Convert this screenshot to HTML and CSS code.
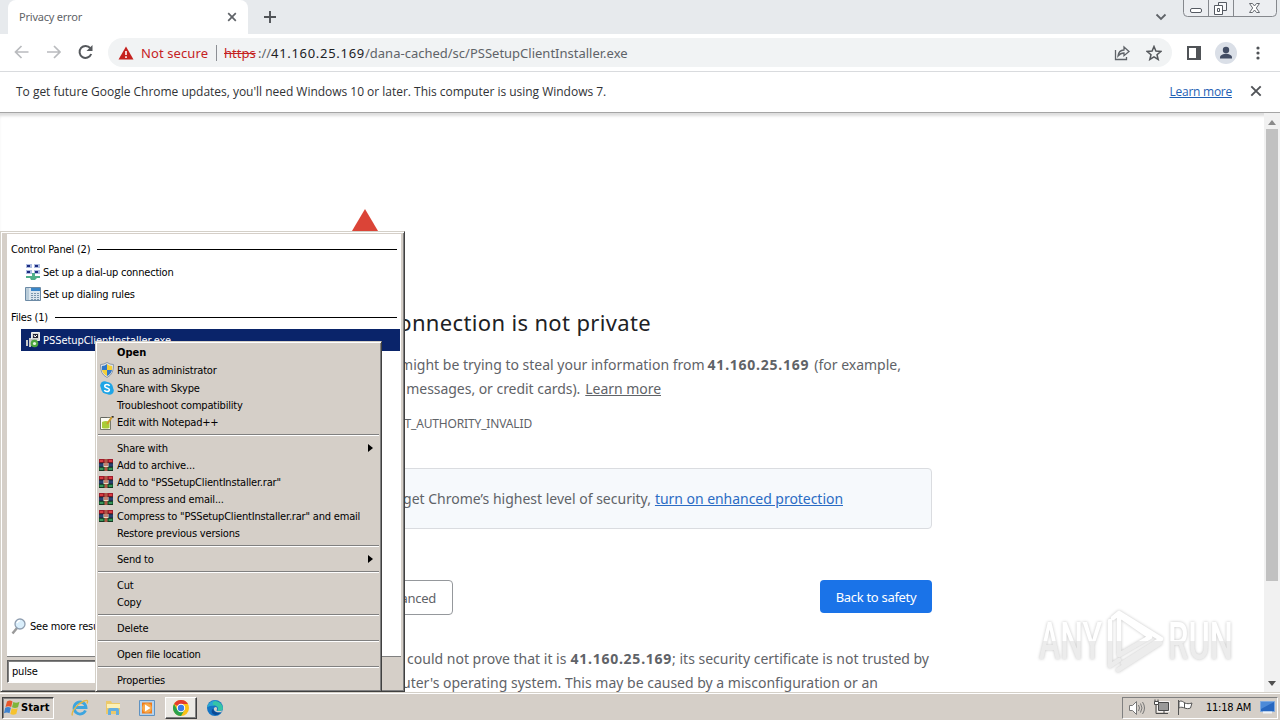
FILE: index.html
```html
<!DOCTYPE html>
<html lang="en">
<head>
<meta charset="utf-8">
<title>Privacy error</title>
<link rel="stylesheet" href="styles.css">
</head>
<body>
<svg class="defs" width="0" height="0">
  <symbol id="books" viewBox="0 0 14 12">
    <path fill="#a01c2c" d="M0 0h14v4H0z"/><path fill="#27406f" d="M0 4h14v4H0z"/><path fill="#176b35" d="M0 8h14v4H0z"/>
    <path stroke="#181818" stroke-width=".7" d="M0 4h14M0 8h14M0 11.6h14"/>
    <path fill="#d83c40" d="M1 1h3v2H1zM10 1h3v2h-3z"/><path fill="#38945a" d="M1 9h3v2H1zM10 9h3v2h-3z"/>
    <path fill="#ad5846" d="M5.500 0h3v12h-3z"/><path fill="#e9dfbe" d="M4.500 4h5v4h-5z"/><path stroke="#a02828" d="M6 4v3M8 4v3"/>
  </symbol>
</svg>

<div class="browser">
  <header class="tabs">
    <div class="tab"><span class="tab-title">Privacy error</span>
      <svg width="10" height="10" viewBox="0 0 10 10"><path d="M1.200 1.200l7.600 7.600M8.800 1.200L1.200 8.800" stroke="#5f6368" stroke-width="1.700"/></svg>
    </div>
    <svg class="plus" width="12" height="12" viewBox="0 0 12 12"><path d="M6 0v12M0 6h12" stroke="#505357" stroke-width="1.900"/></svg>
    <svg class="chev" width="12" height="8" viewBox="0 0 12 8"><path d="M1.500 1.500L6 6l4.500-4.500" fill="none" stroke="#5f6368" stroke-width="1.800"/></svg>
    <svg class="winbtns" width="94" height="18" viewBox="0 0 94 18">
      <path d="M.5-1v13.500q0 4 4 4h85q4 0 4-4V-1M25.500-1v17.500M50.500-1v17.500" fill="#eceef1" stroke="#85888d"/>
      <rect x="7.500" y="8.500" width="11" height="4" rx="1.500" fill="#fff" stroke="#555a62"/>
      <path d="M35.500 2.500h8v8h-8z" fill="#f5f6f8" stroke="#555a62"/><path d="M31.500 5.500h8v9h-8z" fill="#fff" stroke="#555a62"/><path d="M34.500 8.500h2v3h-2z" fill="none" stroke="#555a62"/>
      <path d="M66.500 3.500h3l2 2.500 2-2.500h3l-3.200 4.500 3.200 4.500h-3l-2-2.500-2 2.500h-3l3.200-4.500z" fill="#fff" stroke="#666a70"/>
    </svg>
  </header>

  <div class="toolbar">
    <svg class="nav" width="80" height="18" viewBox="0 0 80 18" fill="none" stroke-width="1.700">
      <path d="M14.500 9H2M7.500 3L1.500 9l6 6M33 9h12.500M40 3l6 6-6 6" stroke="#b9bbbe"/>
      <path d="M76.300 5.200A6 6 0 1 0 77.200 11" stroke="#55585c" stroke-width="2"/><path d="M78.500 2v6h-6z" fill="#55585c"/>
    </svg>
    <div class="omnibox">
      <svg width="16" height="14" viewBox="0 0 16 14"><path d="M8 .5L15.500 13.500H.5z" fill="#c5221f"/><path d="M8 5v4M8 10.200v1.800" stroke="#fff" stroke-width="1.600"/></svg>
      <span class="notsecure">Not secure</span><i class="bar"></i>
      <span class="url"><s>https</s><span class="sl">://</span><b>41.160.25.169</b><span class="path">/dana-cached/sc/PSSetupClientInstaller.exe</span></span>
      <svg class="share" width="16" height="16" viewBox="0 0 16 16" fill="none" stroke="#5f6368" stroke-width="1.300"><path d="M1.500 5v9.500h11V12M4 11c.4-4 2.500-5.800 6-6V2l5 4.500-5 4.200V8C7.500 8 5.600 9 4 11z"/></svg>
      <svg width="16" height="16" viewBox="0 0 16 16"><path d="M8 1.500l1.900 4.600 4.900.4-3.800 3.200 1.200 4.800L8 11.900l-4.200 2.600L5 9.700 1.200 6.500l4.900-.4z" fill="none" stroke="#55585c" stroke-width="1.500"/></svg>
    </div>
    <svg class="panel" width="14" height="14" viewBox="0 0 14 14"><path d="M1 1h12v12H1z" fill="#fff" stroke="#505357" stroke-width="2"/><path d="M9 0h5v14H9z" fill="#505357"/></svg>
    <svg class="avatar" width="22" height="22" viewBox="0 0 22 22"><circle cx="11" cy="11" r="11" fill="#dadfe7"/><circle cx="11" cy="8" r="3.200" fill="#414c63"/><path d="M5 16.500v-1.200c0-2.200 3.600-3.500 6-3.500s6 1.300 6 3.500v1.200z" fill="#414c63"/></svg>
    <svg class="dots" width="4" height="14" viewBox="0 0 4 14" fill="#505357"><circle cx="2" cy="2" r="1.600"/><circle cx="2" cy="7" r="1.600"/><circle cx="2" cy="12" r="1.600"/></svg>
  </div>

  <div class="infobar">
    <span class="msg">To get future Google Chrome updates, you'll need Windows 10 or later. This computer is using Windows 7.</span>
    <a>Learn more</a>
    <svg width="12" height="12" viewBox="0 0 12 12"><path d="M1.300 1.300l9.400 9.400M10.700 1.300l-9.400 9.400" stroke="#505357" stroke-width="1.900"/></svg>
  </div>

  <div class="view">
    <main class="page">
      <svg class="warn" width="60" height="50" viewBox="0 0 60 50"><path d="M30 0L59 49H1z" fill="#db4437"/></svg>
      <h1>connection is not private</h1>
      <div class="line l1"><span>might be trying to steal your information from</span><b>41.160.25.169</b><span>(for example,</span></div>
      <div class="line l2"><span>messages, or credit cards).</span><u>Learn more</u></div>
      <div class="line code">RT_AUTHORITY_INVALID</div>
      <div class="promo"><span>get Chrome’s highest level of security,</span><a>turn on enhanced protection</a></div>
      <div class="buttons"><div class="btn adv">Advanced</div><div class="btn back">Back to safety</div></div>
      <div class="line l3"><span>could not prove that it is</span><span><b>41.160.25.169</b>; its security certificate is not trusted by</span></div>
      <div class="line l4">computer's operating system. This may be caused by a misconfiguration or an</div>
    </main>
    <div class="scroll"><i class="up"></i><i class="thumb"></i><i class="down"></i></div>
  </div>
</div>

<svg class="mark" width="214" height="84" viewBox="0 -6 214 84">
  <defs><linearGradient id="g" x1="0" y1="6" x2="0" y2="68" gradientUnits="userSpaceOnUse"><stop offset=".5" stop-color="#fff"/><stop offset=".5" stop-color="#ececec"/></linearGradient></defs>
  <g fill="url(#g)" font-family="Roboto, sans-serif" font-weight="500" font-size="51">
    <text x="6" y="55" textLength="63" lengthAdjust="spacingAndGlyphs">ANY</text>
    <text x="135" y="55" textLength="65" lengthAdjust="spacingAndGlyphs">RUN</text>
  </g>
  <g fill="none" stroke="url(#g)" stroke-width="4.500" stroke-linejoin="round" stroke-linecap="round"><path d="M86 9v42L117 33 87 12M86 9l42 26-38 24M86 9L80 14M77 17v45L86 56M85 66l42-27"/></g>
</svg>

<footer class="taskbar">
  <div class="start">
    <svg width="17" height="17" viewBox="0 0 17 17"><path d="M3 2.500q3-2 5.500 0L7.200 8Q4.500 6.500 1.500 8z" fill="#e8562a"/><path d="M9.300 3q3 1.500 6.200-.3L14 8.200q-3 1.500-6 0z" fill="#7fb539"/><path d="M1.200 8.800Q4 7.300 6.900 8.800L5.500 14.300Q3 12.800 0 14.300z" fill="#3f83cf"/><path d="M7.700 9.200q3 1.300 6 0L12.300 15q-3 1.500-6 0z" fill="#f6c22c"/></svg>Start</div>
  <svg class="tb ie" width="18" height="18" viewBox="0 0 18 18"><path d="M14.500 11.500A6 6 0 1 1 15 8.500H5" fill="none" stroke="#3da5df" stroke-width="2.800"/><path d="M1.500 16.500C-.5 13 6 5 13 2c4-1.500 4 0 3 2.500" fill="none" stroke="#e4b745" stroke-width="1.400"/></svg>
  <svg class="tb fold" width="17" height="16" viewBox="0 0 17 16"><path d="M1 1h5l1 2h8v11H1z" fill="#ecc96a"/><path d="M2 4h13v4H2z" fill="#fdf0b4"/><path d="M3 15v-5q0-2 2-2h7q2 0 2 2v5h-3v-4H6v4z" fill="#65aee0"/></svg>
  <svg class="tb wmp" width="16" height="16" viewBox="0 0 16 16"><path d="M.5.500h15v15H.5z" fill="#b5d3ed" stroke="#5f92c1"/><path d="M3 2.500h10v11H3z" fill="#ef7c1b"/><circle cx="8" cy="8" r="4.800" fill="#f8a94a"/><path d="M6 4.500v7L11.500 8z" fill="#fff"/></svg>
  <div class="active"><svg width="16" height="16" viewBox="0 0 16 16"><circle cx="8" cy="8" r="8" fill="#fbc116"/><path d="M1.070 4A8 8 0 0 1 14.930 4H8v4z" fill="#e33b2e"/><path d="M1.070 4A8 8 0 0 0 8 16l3.500-6L8 8 4.500 10z" fill="#2ba24c"/><circle cx="8" cy="8" r="4.200" fill="#fff"/><circle cx="8" cy="8" r="3.200" fill="#3a7be8"/></svg></div>
  <svg class="tb edge" width="16" height="16" viewBox="0 0 16 16"><circle cx="8" cy="8" r="8" fill="#1574c4"/><path d="M.3 7A8 8 0 0 1 16 8c0 3-3.500 3.600-5.500 2.500C12 8 10 5.500 7 5.500 4 5.300 1.500 6 .3 7z" fill="#35c4a7"/><path d="M.3 7C2 2 7 0 10 .3 5 1 5 5 7 5.500 4 5.300 1.500 6 .3 7z" fill="#2aa5d8"/><path d="M6.500 8.500c-.5 3 3 5 7.500 3.500-2 3-6 4-8.500 1.500-1.500-1.500-1-4 1-5z" fill="#0b4a94"/><path d="M9 7c2 1.500.5 3 .5 3.500 2 1 5 .5 6.500-.5l-2 2.200C9 13 6 10.500 7 8q1-1 2-1z" fill="#d4d0c8"/></svg>
  <div class="tray">
    <svg width="18" height="18" viewBox="0 0 18 18" fill="none" stroke="#777"><path d="M1.500 6.500h3l4-4v13l-4-4h-3z" fill="#fff"/><path d="M10.500 6q2 3 0 6M12.500 4.500q3 4.500 0 9M14.500 3q4 6 0 12"/></svg>
    <svg width="17" height="17" viewBox="0 0 17 17" stroke="#494949"><path d="M5.500 3.500h10v8h-10z" fill="#aaa" stroke="#fff" stroke-width="2.500"/><path d="M5.500 3.500h10v8h-10z" fill="#999"/><path d="M8 14.500h7M11 12v2M3 6v8.500h5" fill="none"/><path d="M1.500 2.500h4v3h-4zM2 .5v2M5 .5v2" fill="#fff"/></svg>
    <svg width="18" height="17" viewBox="0 0 18 17"><path d="M1.500 1v15M2 2.500c3-1.500 4 .8 5.500 1V9C6 8.500 4 7.500 2 9zM7.500 4c3 .8 4 1 7.500 0L13.500 9c-2 1-4 .7-6 0z" fill="#fff" stroke="#555"/></svg>
    <span>11:18 AM</span>
    <svg width="15" height="13" viewBox="0 0 15 13"><path d="M.5.500h14v10H.5z" fill="#2767c0" stroke="#7ea9df"/><path d="M1 1h13L1 8z" fill="#4c8ad8"/><path d="M3 11.500h9" stroke="#eef2f7" stroke-width="2"/></svg>
  </div>
</footer>

<section class="menu">
  <div class="results">
    <div class="group g1">Control Panel (2)<i></i></div>
    <div class="item"><svg width="16" height="16" viewBox="0 0 16 16"><path d="M1 0h6v4H1zM9 0h6v4H9zM1 6h6v4H1zM9 6h6v4H9z" fill="#aebde2"/><path d="M2 1h3v2H2zM10 1h3v2h-3zM2 7h3v2H2zM10 7h3v2h-3z" fill="#1d2c80"/><path d="M7 9h3v3h5v2h-3l-2 2H6l-1-2H1v-2h6z" fill="#4fae88"/></svg>Set up a dial-up connection</div>
    <div class="item"><svg width="16" height="16" viewBox="0 0 16 16"><path d="M.5 1.500h15v13H.5z" fill="#dbe6ee" stroke="#6c8aa5"/><path d="M1 2h3v12H1z" fill="#b9ccd9"/><path d="M6 2h9v3H6z" fill="#3a86c8"/><path d="M6 7.500h8M6 9.500h8M6 11.500h8M6 13.500h8" stroke="#7d98ad" stroke-dasharray="2 1"/></svg>Set up dialing rules</div>
    <div class="group g2">Files (1)<i></i></div>
    <div class="item sel"><svg width="16" height="16" viewBox="0 0 16 16"><path d="M6.500.500h8v8h-8z" fill="#d5d5d5" stroke="#eee"/><path d="M8 2h5v4H8z" fill="#223"/><path d="M9 3l1 2 2-2" stroke="#fff" fill="none"/><path d="M1 8h2v6H1zM4 6h2v9H4z" fill="#c7c9c9"/><path d="M6 7h6v7H6z" fill="#b9bdb9"/><circle cx="9.500" cy="11.500" r="3.800" fill="#4aa63c"/><circle cx="9.500" cy="11.500" r="1.600" fill="#e6f7df"/></svg>PSSetupClientInstaller.exe</div>
    <div class="more"><svg width="16" height="17" viewBox="0 0 16 17"><path d="M1.500 15.500L6 10" stroke="#9a9a9a" stroke-width="2.500"/><circle cx="9" cy="6" r="5" fill="#d9eefb" stroke="#8f9eb0" stroke-width="1.300"/><path d="M6 5q1-2.500 3-2.500" stroke="#fff" fill="none" stroke-width="1.500"/></svg>See more results</div>
  </div>
  <div class="search"><div class="input">pulse</div></div>
</section>

<nav class="context">
  <div class="row strong">Open</div>
  <div class="row tall"><svg width="14" height="16" viewBox="0 0 14 16"><path d="M7 .5Q10 2.500 13.500 2.500 14 12 7 15.500 0 12 .5 2.500 4 2.500 7 .5z" fill="#dfe4ea" stroke="#8d98a5"/><path d="M7 2v6H2Q1.500 6 2 4q3 0 5-2zM7 8h5q-1 4-5 6z" fill="#2f77c8"/><path d="M7 2q2 2 5 2 .5 2 0 4H7zM7 8v6Q3 12 2 8z" fill="#f4cf38"/></svg>Run as administrator</div>
  <div class="row tall"><svg width="14" height="14" viewBox="0 0 14 14"><circle cx="7" cy="7" r="6" fill="#1fa5e6"/><circle cx="4.500" cy="4.500" r="4.300" fill="#1fa5e6"/><circle cx="9.500" cy="9.500" r="4.300" fill="#1fa5e6"/><path d="M9.500 5q-.5-1.500-2.600-1.500T4.700 5.200q0 1.300 2.300 1.700t2.400 1.900q-.2 1.700-2.400 1.700T4.400 9" fill="none" stroke="#fff" stroke-width="1.500"/></svg>Share with Skype</div>
  <div class="row">Troubleshoot compatibility</div>
  <div class="row"><svg width="14" height="14" viewBox="0 0 14 14"><path d="M.500 1.500h10v12H.5z" fill="#fcfcf4" stroke="#77796c"/><path d="M2 6q4-2 7.500 0v6q-4 1-7.500 0z" fill="#a9cc38"/><path d="M2 2v-1M4 2V1M6 2V1" stroke="#555"/><path d="M7 8l5-7" stroke="#cf9b28" stroke-width="2"/><path d="M12 0l1.500 1.500" stroke="#333" stroke-width="1.600"/></svg>Edit with Notepad++</div>
  <hr>
  <div class="row">Share with<i class="arrow"></i></div>
  <div class="row rar"><svg width="14" height="12"><use href="#books"/></svg>Add to archive...</div>
  <div class="row rar"><svg width="14" height="12"><use href="#books"/></svg>Add to "PSSetupClientInstaller.rar"</div>
  <div class="row rar"><svg width="14" height="12"><use href="#books"/></svg>Compress and email...</div>
  <div class="row rar"><svg width="14" height="12"><use href="#books"/></svg>Compress to "PSSetupClientInstaller.rar" and email</div>
  <div class="row">Restore previous versions</div>
  <hr>
  <div class="row">Send to<i class="arrow"></i></div>
  <hr>
  <div class="row">Cut</div>
  <div class="row">Copy</div>
  <hr>
  <div class="row">Delete</div>
  <hr>
  <div class="row">Open file location</div>
  <hr>
  <div class="row">Properties</div>
</nav>
</body>
</html>
```
FILE: styles.css
```css
* { box-sizing: border-box; }
body { margin: 0; width: 1280px; height: 720px; overflow: hidden; display: flex; flex-direction: column; position: relative; background: #fff; font-family: "Noto Sans", sans-serif; color: #202124; white-space: nowrap; }
svg { flex: none; display: block; }
.defs { position: absolute; }
.browser { height: 692px; display: flex; flex-direction: column; }

.tabs { height: 34px; flex: none; background: #e7eaed; display: flex; align-items: center; }
.tab { width: 240px; height: 34px; margin-left: 8px; padding: 0 11px; background: #fff; border-radius: 8px 8px 0 0; display: flex; align-items: center; justify-content: space-between; }
.tab-title { font: 11px "Noto Sans", sans-serif; letter-spacing: -.22px; margin-top: -1px; color: #5f6368; }
.plus { margin-left: 16px; }
.chev { margin-left: auto; margin-right: 16px; }
.winbtns { align-self: flex-start; margin-right: 3px; }

.toolbar { height: 38px; flex: none; display: flex; align-items: center; border-bottom: 1px solid #d9dbde; }
.nav { margin: -1px 0 0 14px; }
.omnibox { width: 1064px; height: 29px; margin-left: 14px; padding: 0 10px; border-radius: 15px; background: #f1f3f4; display: flex; align-items: center; font-size: 13px; }
.notsecure { margin-left: 7px; width: 67px; color: #c5221f; letter-spacing: .1px; }
.bar { width: 1px; height: 16px; margin: 0 7px 0 8px; background: #8c8f94; }
.url { flex: 1; display: flex; color: #202124; }
.url s { color: #c5221f; width: 34px; }
.sl, .path { color: #5f6368; }
.sl { width: 13px; }
.url b { font-weight: 400; width: 94px; letter-spacing: .7px; }
.share { margin-right: 16px; }
.panel { margin-left: 15px; }
.avatar { margin-left: 14px; }
.dots { margin-left: 19px; }

.infobar { height: 41px; flex: none; padding: 0 18px 2px 16px; border-bottom: 1px solid #a5a5a5; display: flex; align-items: center; font: 12px "Open Sans", sans-serif; color: #303235; }
.msg { flex: 1; letter-spacing: -.02px; }
.infobar a { color: #1f5fb4; text-decoration: underline; margin-right: 18px; letter-spacing: -.25px; }

.view { flex: 1; display: flex; box-shadow: inset 0 4px 3px -1px #ddd; overflow: hidden; }
.page { width: 1264px; display: flex; flex-direction: column; font-size: 14px; line-height: 24px; color: #5f6368; }
.warn { margin: 96px 0 0 335px; }
h1 { width: 651px; margin: 47px 0 1px; text-align: right; font-weight: 400; font-size: 22px; line-height: 32px; letter-spacing: .35px; color: #202124; }
.line { display: flex; justify-content: flex-end; flex: none; }
.l1 { width: 901px; margin-top: 14px; gap: 4px; }
.line b { letter-spacing: .75px; }
.l1 b { margin: 0 1px 0 -1px; }
.l2 { width: 661px; gap: 5px; letter-spacing: -.04px; }
.code { width: 532px; margin-top: 11px; font-size: 12px; letter-spacing: -.15px; }
.promo { width: 600px; height: 61px; margin: 32px 0 0 332px; padding: 1px 88px 0 0; border: 1px solid #dadce0; border-radius: 4px; background: #f6f9fc; display: flex; flex: none; align-items: center; justify-content: flex-end; gap: 4px; }
.promo a { color: #2b6cc4; text-decoration: underline; letter-spacing: -.04px; }
.buttons { width: 600px; margin: 51px 0 0 332px; display: flex; justify-content: space-between; align-items: flex-start; }
.btn { border-radius: 4px; display: flex; align-items: center; font-size: 13px; letter-spacing: -.3px; }
.adv { width: 121px; height: 35px; padding-right: 16px; justify-content: flex-end; border: 1px solid #95989c; }
.back { width: 112px; height: 33px; justify-content: center; color: #fff; background: #1a73e8; }
.l3 { width: 929px; margin-top: 32px; gap: 4px; }
.l4 { width: 878px; }
.scroll { width: 16px; padding-top: 4px; background: #f1f1f1; display: flex; flex-direction: column; align-items: center; }
.up, .down { border: 4px solid transparent; }
.up { border-bottom: 5px solid #8a8a8a; border-top: 0; margin-top: 3px; }
.thumb { width: 12px; height: 452px; margin-top: 4px; background: #c1c1c1; }
.down { border-top: 5px solid #505050; border-bottom: 0; margin-top: 100px; }

.mark { position: absolute; left: 1033px; top: 598px; overflow: visible; filter: drop-shadow(0 0 1.500px #c4c4c4); }

.taskbar { height: 28px; border-top: 1px solid #d4d0c8; box-shadow: inset 0 1px #fff; background: #d5cfc8; display: flex; align-items: center; padding: 2px 2px 0; color: #000; font: 11px "DejaVu Sans Condensed", sans-serif; }
.start { width: 52px; height: 22px; display: flex; align-items: center; padding-left: 1px; border: 1px solid; border-color: #404040 #fff #fff #404040; box-shadow: inset 1px 1px #808080; font-weight: 700; letter-spacing: .1px; }
.ie { margin-left: 17px; }
.fold { margin-left: 16px; }
.wmp { margin-left: 17px; }
.active { width: 32px; height: 22px; margin-left: 10px; display: flex; align-items: center; justify-content: center; background: #ebe9e4; border: 1px solid; border-color: #fff #404040 #404040 #fff; box-shadow: inset -1px -1px #808080; }
.edge { margin-left: 10px; }
.tray { width: 156px; height: 22px; margin-left: auto; padding: 0 2px 0 5px; display: flex; align-items: center; gap: 7px; border: 1px solid; border-color: #808080 #fff #fff #808080; }
.tray span { margin-left: 4px; letter-spacing: -.25px; width: 47px; }

.menu { position: absolute; left: 0; top: 231px; width: 405px; height: 461px; padding: 2px 3px 2px 6px; background: #d5cfc8; border: 1px solid; border-color: #d4d0c8 #404040 #404040 #d4d0c8; box-shadow: inset 1px 1px #fff, inset -1px -1px #808080; color: #000; font: 11px "DejaVu Sans Condensed", sans-serif; letter-spacing: -.2px; }
.results { height: 422px; background: #fff; display: flex; flex-direction: column; padding-right: 1px; }
.group { height: 23px; padding: 0 3px 0 4px; display: flex; align-items: center; gap: 7px; }
.group i { flex: 1; height: 1px; background: #000; }
.g1 { margin-top: 4px; }
.g2 { margin-top: 1px; }
.item { height: 22px; margin-left: 14px; padding-left: 4px; display: flex; align-items: center; gap: 2px; }
.sel { background: #0a246a; color: #fff; letter-spacing: -.05px; }
.more { margin-top: auto; height: 17px; margin-bottom: 21px; padding-left: 4px; display: flex; align-items: center; gap: 3px; }
.search { height: 34px; padding-top: 3px; border-top: 1px solid #808080; }
.input { width: 370px; height: 23px; background: #fff; padding-left: 4px; display: flex; align-items: center; border: 1px solid; border-color: #606060 #fff #fff #606060; box-shadow: inset 1px 1px #808080; }

.context { position: absolute; left: 95px; top: 341px; width: 287px; height: 351px; padding: 2px; background: #d5cfc8; border: 1px solid; border-color: #d4d0c8 #404040 #404040 #d4d0c8; box-shadow: inset 1px 1px #fff, inset -1px -1px #808080; color: #000; font: 11px "DejaVu Sans Condensed", sans-serif; letter-spacing: -.19px; }
.row { height: 17px; padding-left: 19px; display: flex; align-items: center; }
.row svg { margin: 0 3px 0 -17px; }
.rar svg { margin: -1px 4px 0 -18px; }
.tall { height: 18px; }
.strong { font-weight: 700; letter-spacing: 0; }
.arrow { margin-left: auto; margin-right: 6px; border: 4px solid transparent; border-left: 5px solid #000; border-right: 0; margin-top: -1px; }
.context hr { height: 2px; margin: 3px 0 4px; border: 0; border-top: 1px solid #808080; border-bottom: 1px solid #fff; }
```
